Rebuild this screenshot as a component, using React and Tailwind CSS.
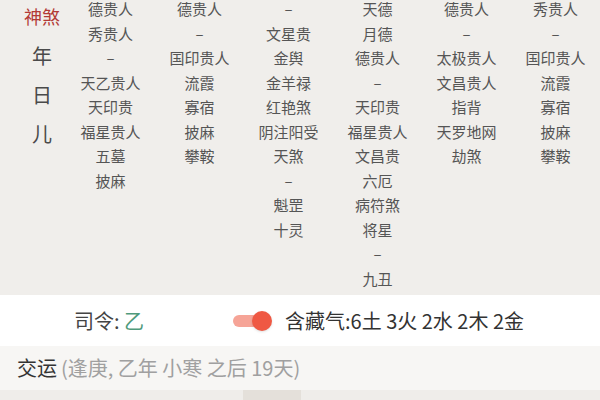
const cols = [
  ["德贵人", "秀贵人", "–", "天乙贵人", "天印贵", "福星贵人", "五墓", "披麻"],
  ["德贵人", "–", "国印贵人", "流霞", "寡宿", "披麻", "攀鞍"],
  ["–", "文星贵", "金舆", "金羊禄", "红艳煞", "阴注阳受", "天煞", "–", "魁罡", "十灵"],
  ["天德", "月德", "德贵人", "–", "天印贵", "福星贵人", "文昌贵", "六厄", "病符煞", "将星", "–", "九丑"],
  ["德贵人", "–", "太极贵人", "文昌贵人", "指背", "天罗地网", "劫煞"],
  ["秀贵人", "–", "国印贵人", "流霞", "寡宿", "披麻", "攀鞍"],
];

export default function App() {
  return (
    <div
      className="w-[600px] h-[400px] overflow-hidden bg-white"
      style={{ fontFamily: '"Noto Sans CJK SC", "Noto Sans", sans-serif' }}
    >
      {/* 神煞 table */}
      <div className="h-[295px] overflow-hidden bg-[#f0eeeb]">
        <div className="-mt-[3px] grid grid-cols-[66px_repeat(6,89px)]">
          <div className="pl-[18px] flex flex-col">
            <div className="w-[48px] h-[39px] flex items-center justify-center text-[18px] text-[#b33a36]">神煞</div>
            {["年", "日", "儿"].map((t) => (
              <div key={t} className="w-[48px] h-[39px] flex items-center justify-center text-[20px] text-[#4a4a4a]">
                {t}
              </div>
            ))}
          </div>
          {cols.map((c, i) => (
            <div key={i} className="flex flex-col">
              {c.map((t, j) => (
                <div key={j} className="h-[24.5px] flex items-center justify-center whitespace-nowrap text-[15px] text-[#555]">
                  {t}
                </div>
              ))}
            </div>
          ))}
        </div>
      </div>

      {/* 司令 row */}
      <div className="h-[51px] flex items-center bg-white text-[20px]">
        <div className="w-[233px] pl-[74px] text-[#444]">
          司令: <span className="text-[#4f9a7c]">乙</span>
        </div>
        <div className="relative w-[40px] h-[22px] flex items-center">
          <div className="w-[37px] h-[12px] rounded-full bg-[#f6a497]" />
          <div className="absolute left-[19px] top-[1px] w-[20px] h-[20px] rounded-full bg-[#ef5843] shadow-sm" />
        </div>
        <div className="pl-[12px] text-[#333]">含藏气:6土 3火 2水 2木 2金</div>
      </div>

      {/* 交运 row */}
      <div className="h-[44px] flex items-center bg-[#f7f6f4] pl-[17px] text-[20px]">
        <span className="text-[#333]">交运</span>
        <span className="ml-[4px] text-[#a0a0a0]">(逢庚, 乙年 小寒 之后 19天)</span>
      </div>

      {/* bottom strip */}
      <div className="h-[10px] flex bg-[#efedea]">
        <div className="w-[243px]" />
        <div className="w-[58px] bg-[#e4e0da]" />
      </div>
    </div>
  );
}
